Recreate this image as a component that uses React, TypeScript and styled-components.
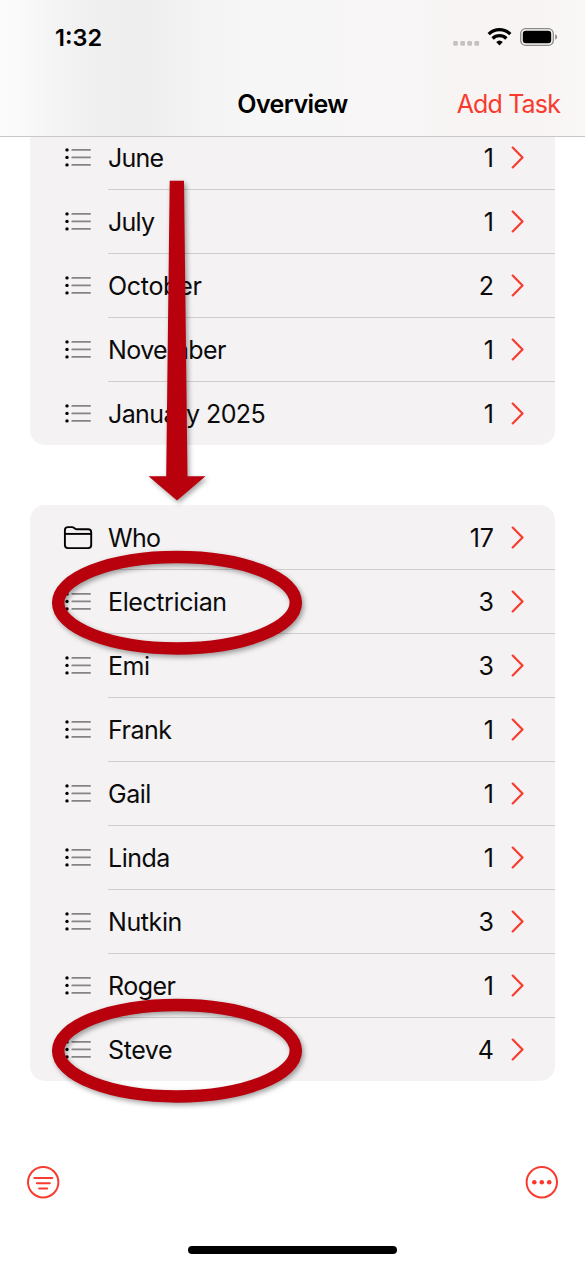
import React from "react";
import styled, { createGlobalStyle } from "styled-components";

const RED = "#f93b2f";
const MARK = "#b9000d";

const GlobalStyle = createGlobalStyle`
  * { box-sizing: border-box; }
  body { margin: 0; background: #fff; }
  button { font: inherit; border: 0; padding: 0; background: none; }
`;

const Screen = styled.div`
  position: relative;
  display: flex;
  flex-direction: column;
  width: 585px;
  height: 1266px;
  overflow: hidden;
  background: #fff;
  color: #0b0b0b;
  font-family: Inter, "Liberation Sans", sans-serif;
  font-size: 25px;
`;

const Header = styled.header`
  flex: none;
  height: 137px;
  border-bottom: 1px solid #c9c8c9;
  background: linear-gradient(90deg, #fcfbfb 0, #faf9f9 25px, #f5f4f4 55px, #f1f0f0 90px, #efeeef 140px,
    #f2f1f2 175px, #f5f4f5 210px, #f7f6f7 250px, #f8f6f7 415px, #f7f4f3 450px, #f7f4f3 530px, #faf8f7 585px);
`;

const StatusBar = styled.div`
  display: flex;
  align-items: center;
  height: 74px;
  padding: 0 27px 0 55px;
`;

const Clock = styled.time`
  flex: 1;
  font-size: 23.5px;
  font-weight: 600;
  letter-spacing: 0;
  color: #000;
`;

const NavBar = styled.div`
  display: grid;
  grid-template-columns: 1fr auto 1fr;
  align-items: center;
  height: 60px;
  padding: 0 25px;
`;

const Title = styled.h1`
  grid-column: 2;
  margin: 0;
  font-size: 25px;
  font-weight: 600;
  letter-spacing: -0.6px;
  color: #000;
`;

const AddButton = styled.button`
  justify-self: end;
  color: ${RED};
  letter-spacing: -0.85px;
  white-space: nowrap;
`;

const Content = styled.main`
  flex: none;
  display: flex;
  flex-direction: column;
  gap: 60px;
  height: 984px;
  padding: 0 30px;
  overflow: hidden;
`;

const Card = styled.ul<{ $scrolled?: boolean }>`
  flex: none;
  list-style: none;
  margin: ${(p) => (p.$scrolled ? "-12px" : "0")} 0 0;
  padding: 0;
  border-radius: 15px;
  background: #f4f2f3;
`;

const Row = styled.li`
  display: flex;
  height: 64px;
  padding-left: 33px;
`;

const IconSlot = styled.span`
  display: flex;
  align-items: center;
  width: 45px;
`;

const RowBody = styled.div`
  flex: 1;
  display: flex;
  align-items: center;
  padding: 0 31px 0 0;
  border-top: 1px solid #cfcecf;

  ${Row}:first-child & { border-top-color: transparent; }
`;

const Label = styled.span<{ $tracking: number }>`
  flex: 1;
  letter-spacing: ${(p) => p.$tracking}px;
`;

const Count = styled.span`
  margin-right: 15px;
  letter-spacing: 0;
`;

const Toolbar = styled.footer`
  display: flex;
  justify-content: space-between;
  padding: 44px 26px 0;
`;

const ToolButton = styled.button`
  display: flex;
`;

const HomeIndicator = styled.div`
  width: 209px;
  height: 8px;
  margin: 47px auto 0 188px;
  border-radius: 4px;
  background: #000;
`;

const Markup = styled.svg`
  position: absolute;
  inset: 0;
  pointer-events: none;
`;

const ListIcon = () => (
  <svg width="30" height="26" viewBox="0 0 30 26">
    <g fill="#000">
      <circle cx="4" cy="5.9" r="1.7" />
      <circle cx="4" cy="13.4" r="1.7" />
      <circle cx="4" cy="20.9" r="1.7" />
    </g>
    <path d="M9.3 5.9h17.7M9.3 13.4h17.7M9.3 20.9h17.7" stroke="#858485" strokeWidth="1.9" strokeLinecap="round" />
  </svg>
);

const FolderIcon = () => (
  <svg width="30" height="26" viewBox="0 0 30 26" fill="none" stroke="#000" strokeWidth="1.9" strokeLinejoin="round">
    <path d="M1.9 21.1V6.1q0-3 3-3h4.1q1.1 0 1.9.7l1 .8q.8.7 2 .7h11.3q3 0 3 3v12.8q0 3-3 3H4.9q-3 0-3-3z" />
    <path d="M2 9.9h26" />
  </svg>
);

const Chevron = () => (
  <svg width="15" height="24" viewBox="0 0 15 24" fill="none" stroke={RED} strokeWidth="2.2" strokeLinecap="round" strokeLinejoin="round">
    <path d="M3.7 1.6 13.5 11.5 3.7 21.4" />
  </svg>
);

const StatusIcons = () => (
  <svg width="108" height="26" viewBox="450 24 108 26">
    <g fill="#c4c1c1">
      {[453.2, 460.3, 467.3, 474.4].map((x) => (
        <rect key={x} x={x} y="41" width="4.7" height="4.7" rx="1.3" />
      ))}
    </g>
    <g fill="none" stroke="#000" strokeWidth="3.3">
      <path d="M488.7 34.1a15.5 15.5 0 0 1 21.6 0" />
      <path d="M492.6 38.5a9.9 9.9 0 0 1 13.8 0" />
    </g>
    <path d="M496.2 42.1a4.8 4.8 0 0 1 6.6 0L499.5 45.6z" fill="#000" />
    <rect x="520.7" y="28.7" width="32.6" height="16.6" rx="4.8" fill="none" stroke="#8d8a8a" strokeWidth="1.3" />
    <rect x="522.8" y="30.8" width="28.4" height="12.4" rx="3" fill="#000" />
    <path d="M555.2 34.3q2 .8 2 2.7t-2 2.7z" fill="#8d8a8a" />
  </svg>
);

const FilterIcon = () => (
  <svg width="34" height="34" viewBox="0 0 34 34" fill="none" stroke={RED} strokeWidth="2" strokeLinecap="round">
    <circle cx="17.2" cy="17.3" r="15.2" />
    <path d="M8.3 13h18M10.8 18.3h13M13.2 23.5h8" />
  </svg>
);

const MoreIcon = () => (
  <svg width="34" height="34" viewBox="0 0 34 34">
    <circle cx="16.8" cy="17.3" r="15.2" fill="none" stroke={RED} strokeWidth="2" />
    <g fill={RED}>
      <circle cx="9.3" cy="17.3" r="2.3" />
      <circle cx="16.8" cy="17.3" r="2.3" />
      <circle cx="24.2" cy="17.3" r="2.3" />
    </g>
  </svg>
);

type Item = { name: string; count: number; tracking?: number; folder?: boolean };

const months: Item[] = [
  { name: "June", count: 1, tracking: -0.75 },
  { name: "July", count: 1, tracking: -0.75 },
  { name: "October", count: 2, tracking: -0.3 },
  { name: "November", count: 1, tracking: -0.6 },
  { name: "January 2025", count: 1, tracking: -0.6 },
];

const people: Item[] = [
  { name: "Who", count: 17, tracking: -0.7, folder: true },
  { name: "Electrician", count: 3, tracking: -0.4 },
  { name: "Emi", count: 3 },
  { name: "Frank", count: 1 },
  { name: "Gail", count: 1 },
  { name: "Linda", count: 1 },
  { name: "Nutkin", count: 3, tracking: -0.4 },
  { name: "Roger", count: 1 },
  { name: "Steve", count: 4, tracking: -0.4 },
];

const ItemRow = ({ name, count, tracking = -0.5, folder }: Item) => (
  <Row>
    <IconSlot>{folder ? <FolderIcon /> : <ListIcon />}</IconSlot>
    <RowBody>
      <Label $tracking={tracking}>{name}</Label>
      <Count>{count}</Count>
      <Chevron />
    </RowBody>
  </Row>
);

export default function App() {
  return (
    <Screen>
      <GlobalStyle />
      <Header>
        <StatusBar>
          <Clock>1:32</Clock>
          <StatusIcons />
        </StatusBar>
        <NavBar>
          <Title>Overview</Title>
          <AddButton>Add Task</AddButton>
        </NavBar>
      </Header>
      <Content>
        <Card $scrolled>
          {months.map((m) => <ItemRow key={m.name} {...m} />)}
        </Card>
        <Card>
          {people.map((p) => <ItemRow key={p.name} {...p} />)}
        </Card>
      </Content>
      <Toolbar>
        <ToolButton aria-label="Filter"><FilterIcon /></ToolButton>
        <ToolButton aria-label="More"><MoreIcon /></ToolButton>
      </Toolbar>
      <HomeIndicator />
      <Markup width="585" height="1266" viewBox="0 0 585 1266">
        <defs>
          <filter id="shadow" filterUnits="userSpaceOnUse" x="0" y="150" width="400" height="1000" colorInterpolationFilters="sRGB">
            <feDropShadow dx="2" dy="2.5" stdDeviation="2.6" floodColor="#000" floodOpacity="0.36" />
          </filter>
        </defs>
        <g filter="url(#shadow)">
          <path d="M169.7 180.7H184L187.5 476.3H205.5L177 500.5 148.5 476.3H166.2z" fill={MARK} />
        </g>
        <g filter="url(#shadow)" fill="none" stroke={MARK} strokeWidth="12.5">
          <ellipse cx="177" cy="602.7" rx="118.8" ry="45.7" />
          <ellipse cx="177" cy="1050.7" rx="118.8" ry="45.7" />
        </g>
      </Markup>
    </Screen>
  );
}
